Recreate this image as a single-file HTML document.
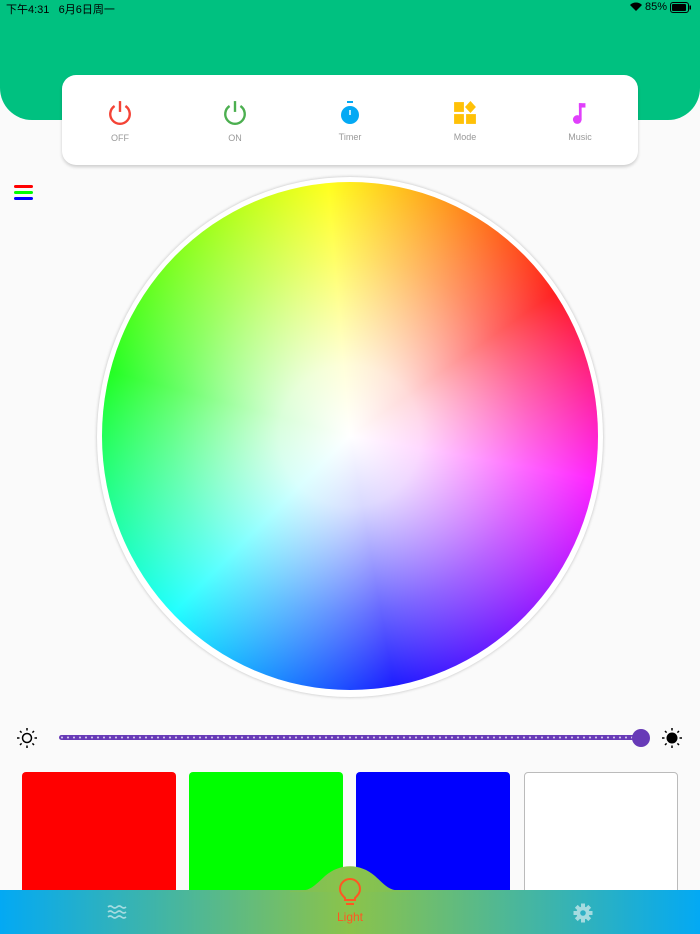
<!DOCTYPE html>
<html><head><meta charset="utf-8"><style>
*{margin:0;padding:0;box-sizing:border-box}
body{width:700px;height:934px;background:#fafafa;position:relative;overflow:hidden;font-family:"Liberation Sans","Noto Sans CJK SC",sans-serif}
.hdr{position:absolute;left:0;top:0;width:700px;height:120px;background:#00c180;border-radius:0 0 32px 32px}
.sb{position:absolute;top:1px;left:6px;font-size:11px;color:#000}
.sbr{position:absolute;top:1px;right:8px;font-size:11px;color:#000;display:flex;align-items:center;gap:3px}
.card{position:absolute;left:62px;top:75px;width:576px;height:90px;background:#fff;border-radius:14px;box-shadow:0 2px 3px rgba(0,0,0,.18)}
.it{position:absolute;top:25px;width:60px;text-align:center;font-size:9px;color:#999}
.it svg{display:block;margin:0 auto 7px}
.wheelring{position:absolute;left:97px;top:177px;width:506px;height:520px;border-radius:50%;background:#fff;box-shadow:0 0 3px rgba(0,0,0,.25)}
.wheel{position:absolute;left:102px;top:182px;width:496px;height:508px;border-radius:50%;background:conic-gradient(from -5deg,#ff0 0deg,#ff8000 30deg,#f00 60deg,#f0f 105deg,#00f 175deg,#0ff 230deg,#0f0 290deg,#ff0 360deg)}
.wheel:after{content:"";position:absolute;inset:0;border-radius:50%;background:radial-gradient(circle,#fff 0%,rgba(255,255,255,.85) 20%,rgba(255,255,255,.4) 50%,rgba(255,255,255,0) 80%)}
.sw{position:absolute;top:772px;width:154px;height:130px;border-radius:4px}
.nav{position:absolute;left:0;top:890px;width:700px;height:44px;background:linear-gradient(90deg,#03a9f4,#8bc34a 50%,#03a9f4)}
</style></head><body>
<div class="hdr"></div>
<div class="sb">下午4:31&nbsp;&nbsp; 6月6日周一</div>
<div class="sbr"><svg width="12" height="10" viewBox="0 0 12 10"><path d="M6 9L0 3a8.5 8.5 0 0 1 12 0z" fill="#000"/></svg>85%<svg width="22" height="11" viewBox="0 0 22 11"><rect x=".5" y=".5" width="18" height="10" rx="2.5" fill="none" stroke="#000"/><rect x="2" y="2" width="14" height="7" rx="1" fill="#000"/><rect x="19.5" y="3.5" width="1.5" height="4" fill="#000"/></svg></div>
<div class="card">
 <div class="it" style="left:28px"><svg width="26" height="26" viewBox="0 0 24 24"><path d="M7 5.5A9 9 0 1 0 17 5.5" fill="none" stroke="#f44336" stroke-width="2.2"/><path d="M12 1v10" stroke="#f44336" stroke-width="2.2"/></svg>OFF</div>
 <div class="it" style="left:143px"><svg width="26" height="26" viewBox="0 0 24 24"><path d="M7 5.5A9 9 0 1 0 17 5.5" fill="none" stroke="#4caf50" stroke-width="2.2"/><path d="M12 1v10" stroke="#4caf50" stroke-width="2.2"/></svg>ON</div>
 <div class="it" style="left:258px;top:26px"><svg width="22" height="24" viewBox="0 0 22 24"><rect x="8" y="0" width="6" height="2" fill="#03a9f4"/><circle cx="11" cy="14" r="9" fill="#03a9f4"/><path d="M11 9v5" stroke="#fff" stroke-width="1.5"/></svg>Timer</div>
 <div class="it" style="left:373px;top:26px"><svg width="24" height="24" viewBox="0 0 22 22" fill="#ffc107"><rect x="1" y="1" width="9" height="9"/><path d="M16 0l5 5.5-5 5.5-5-5.5z"/><rect x="1" y="12" width="9" height="9"/><rect x="12" y="12" width="9" height="9"/></svg>Mode</div>
 <div class="it" style="left:488px;top:26px"><svg width="24" height="24" viewBox="0 0 22 22" fill="#e040fb"><rect x="10" y="2" width="2.5" height="15"/><rect x="10" y="2" width="6" height="4"/><circle cx="8.5" cy="17" r="4"/></svg>Music</div>
</div>
<svg style="position:absolute;left:14px;top:185px" width="20" height="16"><rect y="0" width="19" height="3" rx="1.5" fill="#f00"/><rect y="6" width="19" height="3" rx="1.5" fill="#0f0"/><rect y="12" width="19" height="3" rx="1.5" fill="#00f"/></svg>
<div class="wheelring"></div><div class="wheel"></div>
<svg style="position:absolute;left:17px;top:728px" width="20" height="20" viewBox="0 0 20 20"><circle cx="10" cy="10" r="4.5" fill="none" stroke="#000" stroke-width="1.5"/><g stroke="#000" stroke-width="1.5"><path d="M10 0v2.5M10 17.5V20M0 10h2.5M17.5 10H20M3 3l1.6 1.6M15.4 15.4L17 17M3 17l1.6-1.6M15.4 4.6L17 3"/></g></svg>
<div style="position:absolute;left:59px;top:735px;width:584px;height:5px;border-radius:3px;background:#673ab7;background-image:radial-gradient(circle,#d1c4e9 0.8px,transparent 1.2px);background-size:6px 5px"></div>
<div style="position:absolute;left:632px;top:729px;width:18px;height:18px;border-radius:50%;background:#673ab7"></div>
<svg style="position:absolute;left:662px;top:728px" width="20" height="20" viewBox="0 0 20 20"><circle cx="10" cy="10" r="5.5" fill="#000"/><g stroke="#000" stroke-width="1.5"><path d="M10 0v2.5M10 17.5V20M0 10h2.5M17.5 10H20M3 3l1.6 1.6M15.4 15.4L17 17M3 17l1.6-1.6M15.4 4.6L17 3"/></g></svg>
<div class="sw" style="left:22px;background:#f00"></div>
<div class="sw" style="left:189px;background:#0f0"></div>
<div class="sw" style="left:356px;background:#00f"></div>
<div class="sw" style="left:524px;background:#fff;border:1px solid #bbb"></div>
<div class="nav"></div>
<svg style="position:absolute;left:290px;top:866px" width="120" height="26" viewBox="0 0 120 26"><defs><linearGradient id="g" x1="0" x2="1"><stop offset="0" stop-color="#7dbf5a"/><stop offset=".5" stop-color="#8bc34a"/><stop offset="1" stop-color="#7dbf5a"/></linearGradient></defs><path d="M0 25C20 25 20 24 35 10C50-3 70-3 85 10C100 24 100 25 120 25V26H0z" fill="url(#g)"/></svg>
<svg style="position:absolute;left:337px;top:878px" width="26" height="30" viewBox="0 0 26 30"><path d="M8 20C4 16 3 14 3 11a10 10 0 0 1 20 0c0 3-1 5-5 9v2H8z" fill="none" stroke="#ff5722" stroke-width="2"/><rect x="9" y="25" width="8" height="2" fill="#ff5722"/></svg>
<div style="position:absolute;left:320px;top:910px;width:60px;text-align:center;font-size:12px;color:#ff5722">Light</div>
<svg style="position:absolute;left:107px;top:905px" width="20" height="16" viewBox="0 0 20 16" fill="none" stroke="#a5dbe0" stroke-width="1.6"><path d="M1 2q2.25-2 4.5 0t4.5 0 4.5 0 4.5 0M1 7q2.25-2 4.5 0t4.5 0 4.5 0 4.5 0M1 12q2.25-2 4.5 0t4.5 0 4.5 0 4.5 0"/></svg>
<svg style="position:absolute;left:573px;top:903px" width="20" height="20" viewBox="0 0 20 20"><g fill="#a5dbe0"><circle cx="10" cy="10" r="6.5"/><g><rect x="8" y="0.5" width="4" height="4"/><rect x="8" y="15.5" width="4" height="4"/><rect x="0.5" y="8" width="4" height="4"/><rect x="15.5" y="8" width="4" height="4"/></g><g transform="rotate(45 10 10)"><rect x="8" y="0.5" width="4" height="4"/><rect x="8" y="15.5" width="4" height="4"/><rect x="0.5" y="8" width="4" height="4"/><rect x="15.5" y="8" width="4" height="4"/></g></g><circle cx="10" cy="10" r="2.8" fill="#2fb1c6"/></svg>
</body></html>
